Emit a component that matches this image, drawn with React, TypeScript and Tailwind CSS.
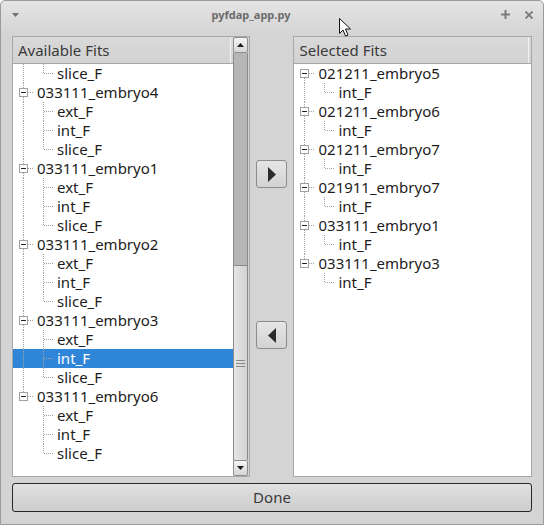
import React from 'react'

type Row = {
  label: string
  level: 0 | 1
  first?: boolean
  lastRoot?: boolean
  lastChild?: boolean
  parentLast?: boolean
  selected?: boolean
}

const font = { fontFamily: '"Noto Sans", "Open Sans", sans-serif' }

function buildTree(groups: { name: string; kids: string[] }[], opts: { headKids?: string[]; selected?: [number, number] } = {}) {
  const rows: Row[] = []
  if (opts.headKids) {
    opts.headKids.forEach((k, i) =>
      rows.push({ label: k, level: 1, lastChild: i === opts.headKids!.length - 1, parentLast: false })
    )
  }
  groups.forEach((g, gi) => {
    const lastRoot = gi === groups.length - 1
    rows.push({ label: g.name, level: 0, first: !opts.headKids && gi === 0, lastRoot })
    g.kids.forEach((k, ki) =>
      rows.push({
        label: k,
        level: 1,
        lastChild: ki === g.kids.length - 1,
        parentLast: lastRoot,
        selected: opts.selected && opts.selected[0] === gi && opts.selected[1] === ki,
      })
    )
  })
  return rows
}

const leftRows = buildTree(
  [
    { name: '033111_embryo4', kids: ['ext_F', 'int_F', 'slice_F'] },
    { name: '033111_embryo1', kids: ['ext_F', 'int_F', 'slice_F'] },
    { name: '033111_embryo2', kids: ['ext_F', 'int_F', 'slice_F'] },
    { name: '033111_embryo3', kids: ['ext_F', 'int_F', 'slice_F'] },
    { name: '033111_embryo6', kids: ['ext_F', 'int_F', 'slice_F'] },
  ],
  { headKids: ['slice_F'], selected: [3, 1] }
)

const rightRows = buildTree([
  { name: '021211_embryo5', kids: ['int_F'] },
  { name: '021211_embryo6', kids: ['int_F'] },
  { name: '021211_embryo7', kids: ['int_F'] },
  { name: '021911_embryo7', kids: ['int_F'] },
  { name: '033111_embryo1', kids: ['int_F'] },
  { name: '033111_embryo3', kids: ['int_F'] },
])

const dot = { stroke: '#a3a3a3', strokeWidth: 1, strokeDasharray: '1 1' }

function Branch({ up, down, across, box }: { up?: boolean; down?: boolean; across?: boolean; box?: boolean }) {
  return (
    <svg width="20" height="19" className="shrink-0 block">
      {up && <line x1="10.5" y1="0" x2="10.5" y2={box ? 5 : 10} {...dot} />}
      {down && <line x1="10.5" y1={box ? 14 : 10} x2="10.5" y2="19" {...dot} />}
      {across && <line x1={box ? 15 : 11} y1="9.5" x2="20" y2="9.5" {...dot} />}
      {box && (
        <>
          <rect x="6.5" y="5.5" width="8" height="8" fill="#fff" stroke="#a0a0a0" />
          <line x1="8" y1="9.5" x2="13" y2="9.5" stroke="#222" />
        </>
      )}
    </svg>
  )
}

function TreeRow({ row }: { row: Row }) {
  return (
    <div className={`flex items-center h-[19px] ${row.selected ? 'bg-[#2f86d9] text-white' : 'text-[#1c1c1c]'}`}>
      {row.level === 0 ? (
        <Branch up={!row.first} down={!row.lastRoot} across box />
      ) : (
        <>
          <Branch up={!row.parentLast} down={!row.parentLast} />
          <Branch up down={!row.lastChild} across />
        </>
      )}
      <span className="pl-[4px] text-[15px] leading-[19px] whitespace-nowrap">{row.label}</span>
    </div>
  )
}

function Header({ title }: { title: string }) {
  return (
    <div className="h-[27px] flex items-center bg-gradient-to-b from-[#d9d9d9] to-[#d2d2d2] border-b border-[#a6a6a6] text-[15px] text-[#3a3a3a] shrink-0">
      <div className="flex-1 pl-[5px] h-full flex items-center border-r border-[#f2f2f2]">{title}</div>
      <div className="w-[2px]" />
    </div>
  )
}

function ScrollButton({ up }: { up?: boolean }) {
  return (
    <div className="h-[16px] w-[15px] rounded-[2px] border border-[#8e8e8e] bg-gradient-to-b from-[#f4f4f4] to-[#d6d6d6] flex items-center justify-center shrink-0">
      <svg width="7" height="4">
        <polygon points={up ? '3.5,0 7,4 0,4' : '0,0 7,0 3.5,4'} fill="#1e1e1e" />
      </svg>
    </div>
  )
}

function Scrollbar() {
  return (
    <div className="w-[16px] flex flex-col shrink-0 bg-[#d4d4d4]">
      <ScrollButton up />
      <div className="w-[15px] flex-1 flex flex-col border-x border-[#8a8a8a] bg-[#b6b6b6]">
        <div className="h-[212px]" />
        <div className="flex-1 border-t border-[#8a8a8a] bg-gradient-to-r from-[#e6e6e6] to-[#d2d2d2] flex items-center justify-center">
          <svg width="9" height="7">
            <line x1="0" y1="0.5" x2="9" y2="0.5" stroke="#8a8a8a" />
            <line x1="0" y1="3.5" x2="9" y2="3.5" stroke="#8a8a8a" />
            <line x1="0" y1="6.5" x2="9" y2="6.5" stroke="#8a8a8a" />
          </svg>
        </div>
      </div>
      <ScrollButton />
    </div>
  )
}

function ArrowButton({ dir }: { dir: 'left' | 'right' }) {
  return (
    <div className="w-[31px] h-[28px] rounded-[3px] border border-[#8c8c8c] bg-gradient-to-b from-[#e6e6e6] to-[#d2d2d2] flex items-center justify-center">
      <svg width="8" height="15">
        <polygon points={dir === 'right' ? '0,0 8,7.5 0,15' : '8,0 0,7.5 8,15'} fill="#2b2b2b" />
      </svg>
    </div>
  )
}

export default function App() {
  return (
    <div className="w-[544px] h-[525px] relative overflow-hidden" style={font}>
      <div className="w-full h-full flex flex-col bg-[#d4d4d4] border border-[#9a9a9a] rounded-t-[5px]">
        {/* title bar */}
        <div className="h-[34px] flex items-start pt-[6px] bg-gradient-to-b from-[#e4e4e4] to-[#d4d4d4] rounded-t-[5px] shrink-0">
          <div className="w-[40px] pl-[11px] pt-[6px]">
            <svg width="7" height="4">
              <polygon points="0,0 7,0 3.5,4" fill="#6f6f6f" />
            </svg>
          </div>
          <div className="flex-1 text-center text-[11px] font-bold text-[#6b6b6b] leading-[16px]">pyfdap_app.py</div>
          <div className="w-[82px] flex items-center gap-[15px] pl-[40px] pt-[3px]">
            <svg width="9" height="9">
              <line x1="4.5" y1="0" x2="4.5" y2="9" stroke="#7a7a7a" strokeWidth="2" />
              <line x1="0" y1="4.5" x2="9" y2="4.5" stroke="#7a7a7a" strokeWidth="2" />
            </svg>
            <svg width="8" height="8">
              <line x1="0.5" y1="0.5" x2="7.5" y2="7.5" stroke="#7a7a7a" strokeWidth="1.8" />
              <line x1="7.5" y1="0.5" x2="0.5" y2="7.5" stroke="#7a7a7a" strokeWidth="1.8" />
            </svg>
          </div>
        </div>

        {/* panels */}
        <div className="flex px-[11px] h-[441px] shrink-0 pt-[1px]">
          <div className="w-[238px] h-[441px] flex border border-[#a8a8a8]">
            <div className="flex-1 flex flex-col bg-white">
              <Header title="Available Fits" />
              <div className="flex-1 overflow-hidden">
                {leftRows.map((r, i) => (
                  <TreeRow key={i} row={r} />
                ))}
              </div>
            </div>
            <Scrollbar />
          </div>

          <div className="w-[44px] flex flex-col items-center pt-[124px] gap-[133px]">
            <ArrowButton dir="right" />
            <ArrowButton dir="left" />
          </div>

          <div className="w-[239px] h-[441px] flex flex-col border border-[#a8a8a8] bg-white">
            <Header title="Selected Fits" />
            <div className="flex-1 overflow-hidden">
              {rightRows.map((r, i) => (
                <TreeRow key={i} row={r} />
              ))}
            </div>
          </div>
        </div>

        {/* done */}
        <div className="px-[11px] pt-[7px]">
          <div className="h-[29px] rounded-[3px] border border-[#262626] bg-gradient-to-b from-[#e0e0e0] to-[#cdcdcd] flex items-center justify-center text-[15px] text-[#3a3a3a]">
            Done
          </div>
        </div>
      </div>

      {/* mouse cursor */}
      <svg width="14" height="22" className="absolute left-[338px] top-[17px]">
        <path d="M1.5 1.5 L1.5 16.5 L5 13 L7.5 19 L10 18 L7.5 12 L12.5 12 Z" fill="#fff" stroke="#111" strokeWidth="1" strokeLinejoin="round" />
      </svg>
    </div>
  )
}
